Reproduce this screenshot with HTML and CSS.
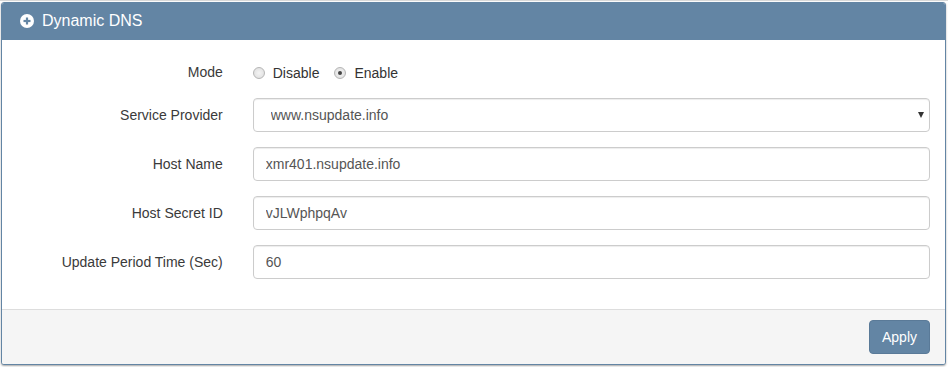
FILE: index.html
```html
<!DOCTYPE html>
<html lang="en">

<head>
  <meta charset="UTF-8" />
  <meta name="viewport" content="width=device-width, initial-scale=1.0" />
  <title>Dynamic DNS</title>
  <link rel="stylesheet" href="styles.css">
</head>

<body>
  <div class="panel">
    <div class="panel-heading">
      <svg class="icon" width="14" height="14" viewBox="0 0 14 14">
        <circle cx="7" cy="7" r="7" fill="#fff" />
        <rect x="3.5" y="5.9" width="7" height="2.2" fill="#6385a4" />
        <rect x="5.9" y="3.5" width="2.2" height="7" fill="#6385a4" />
      </svg>
      <span>Dynamic DNS</span>
    </div>
    <form class="panel-body">
      <div class="form-group mode">
        <label class="control-label">Mode</label>
        <div class="control">
          <label class="radio-inline"><input type="radio" name="mode" value="0"> Disable</label>
          <label class="radio-inline"><input type="radio" name="mode" value="1" checked> Enable</label>
        </div>
      </div>
      <div class="form-group">
        <label class="control-label">Service Provider</label>
        <div class="control">
          <div class="select-wrap">
            <select class="form-control">
              <option>www.nsupdate.info</option>
            </select>
          </div>
        </div>
      </div>
      <div class="form-group">
        <label class="control-label">Host Name</label>
        <div class="control">
          <input class="form-control" type="text" value="xmr401.nsupdate.info">
        </div>
      </div>
      <div class="form-group">
        <label class="control-label">Host Secret ID</label>
        <div class="control">
          <input class="form-control" type="text" value="vJLWphpqAv">
        </div>
      </div>
      <div class="form-group">
        <label class="control-label">Update Period Time (Sec)</label>
        <div class="control">
          <input class="form-control" type="text" value="60">
        </div>
      </div>
    </form>
    <div class="panel-footer">
      <button class="btn" type="button">Apply</button>
    </div>
  </div>
</body>

</html>
```

FILE: styles.css
```css
* {
  margin: 0;
  padding: 0;
  box-sizing: border-box;
}

body {
  font-family: "Liberation Sans", Arial, sans-serif;
  font-size: 14px;
  line-height: 20px;
  color: #333;
  background: #fff;
  padding: 1px 2px 2px 1px;
  border-top: 1px solid #d8d8d8;
}

.panel {
  border: 1px solid #6385a4;
  border-radius: 3px;
  background: #fff;
  box-shadow: 0 1px 2px rgba(0, 0, 0, .35);
  overflow: hidden;
}

.panel-heading {
  background: #6385a4;
  color: #fff;
  height: 38px;
  padding: 0 18px;
  display: flex;
  align-items: center;
  gap: 8px;
  font-size: 16px;
  margin-top: -1px;
}

.panel-heading .icon {
  margin-top: -1px;
}

.panel-body {
  padding: 15px 15px 15px;
  border-bottom: 1px solid #ddd;
}

.form-group {
  display: grid;
  grid-template-columns: 25% 75%;
  margin: 0 -15px 15px;
}

.form-group.mode {
  height: 28px;
}

.form-group .control-label,
.form-group .control {
  padding: 0 15px;
}

.control-label {
  text-align: right;
  padding-top: 7px !important;
  color: #3a3a3a;
}

.mode .control {
  padding-top: 7px;
  display: flex;
  gap: 15px;
}

.radio-inline {
  display: flex;
  align-items: center;
  gap: 8px;
  color: #333;
}

.radio-inline input {
  appearance: none;
  width: 12px;
  height: 12px;
  border-radius: 50%;
  border: 1px solid #b5b5b5;
  background: radial-gradient(circle, #f4f4f4 0, #dcdcdc 100%);
  display: grid;
  place-items: center;
}

.radio-inline input:checked::after {
  content: "";
  width: 4px;
  height: 4px;
  border-radius: 50%;
  background: #444;
}

.form-control {
  display: block;
  width: 100%;
  height: 34px;
  padding: 6px 12px;
  font: inherit;
  color: #555;
  background: #fff;
  border: 1px solid #ccc;
  border-radius: 4px;
  box-shadow: inset 0 1px 1px rgba(0, 0, 0, .075);
}

.select-wrap {
  position: relative;
}

.select-wrap select {
  appearance: none;
  padding-left: 17px;
}

.select-wrap::after {
  content: "";
  position: absolute;
  right: 6px;
  top: 14px;
  border-left: 3px solid transparent;
  border-right: 3px solid transparent;
  border-top: 6px solid #333;
}

.panel-footer {
  background: #f5f5f5;
  padding: 10px 15px;
  display: flex;
  justify-content: flex-end;
}

.btn {
  font: inherit;
  color: #fff;
  background: #6385a4;
  border: 1px solid #5a7a98;
  border-radius: 4px;
  padding: 6px 12px;
  height: 34px;
}
```
